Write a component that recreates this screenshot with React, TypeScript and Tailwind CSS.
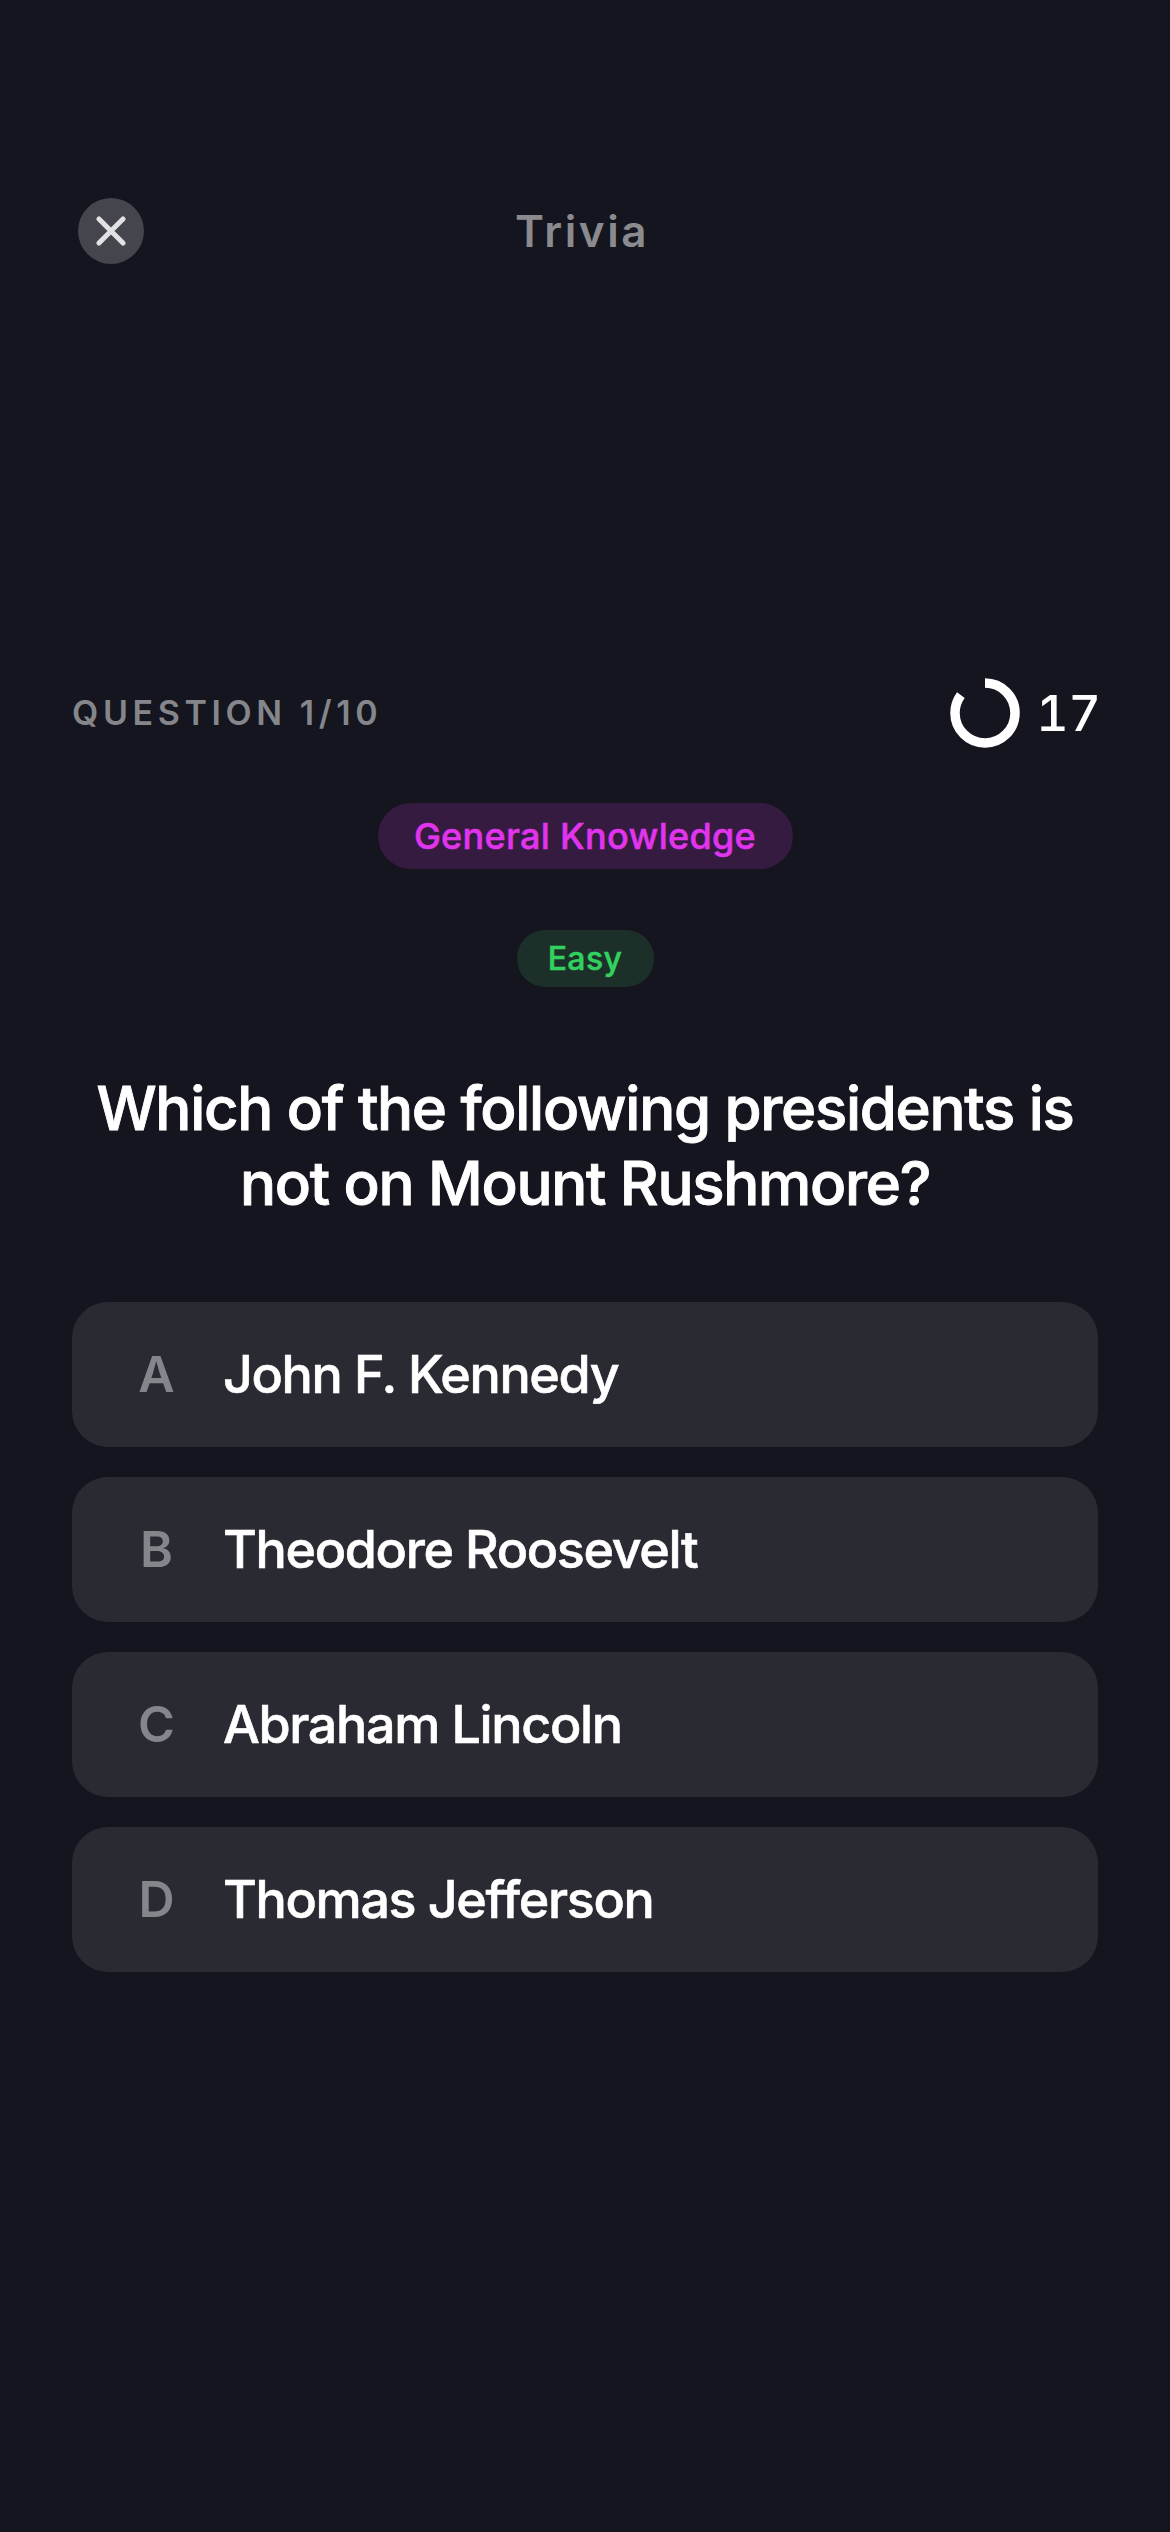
const answers = [
  { letter: 'A', text: 'John F. Kennedy' },
  { letter: 'B', text: 'Theodore Roosevelt' },
  { letter: 'C', text: 'Abraham Lincoln' },
  { letter: 'D', text: 'Thomas Jefferson' },
]

export default function App() {
  return (
    <div className="min-h-[2532px] bg-[#14151e] pt-[198px] font-['Inter',sans-serif] text-white">
      <div className="flex items-center pl-[78px]">
        <button className="flex h-[66px] w-[66px] items-center justify-center rounded-full bg-[#44454d]">
          <svg width="30" height="30" viewBox="0 0 30 30" fill="none" stroke="#e2e2e4" strokeWidth="5" strokeLinecap="round">
            <path d="M3 3 L27 27 M27 3 L3 27" />
          </svg>
        </button>
        <h1 className="ml-[371px] text-[44px] leading-[66px] font-semibold tracking-[2.6px] text-[#8a8a8f]">Trivia</h1>
      </div>

      <div className="mt-[414px] flex h-[69px] items-center justify-between pl-[72px] pr-[69px]">
        <span className="text-[34px] font-semibold tracking-[4.6px] text-[#85868c]">QUESTION 1/10</span>
        <div className="flex items-center gap-[16px]">
          <svg width="70" height="70" viewBox="0 0 70 70" fill="none" stroke="#ffffff" strokeWidth="9.5">
            <circle cx="35" cy="35" r="30" strokeDasharray="160.2 188.5" transform="rotate(-90 35 35)" />
          </svg>
          <span className="text-[50px] leading-none font-medium tabular-nums">17</span>
        </div>
      </div>

      <div className="mt-[56px] flex flex-col items-center gap-[61px]">
        <span className="flex h-[66px] w-[415px] items-center justify-center rounded-[33px] bg-[#351b40] text-[36px] font-medium tracking-[0.3px] text-[#e035ed] [-webkit-text-stroke:0.5px_#e035ed]">
          General Knowledge
        </span>
        <span className="flex h-[57px] w-[137px] items-center justify-center rounded-[28px] bg-[#1c3029] text-[32px] font-medium tracking-[0.4px] text-[#32d15f] [-webkit-text-stroke:0.5px_#32d15f]">
          Easy
        </span>
      </div>

      <h2 className="mx-[72px] mt-[84px] text-center text-[60px] leading-[75px] font-medium tracking-[-1.3px] [-webkit-text-stroke:0.9px_#ffffff]">
        Which of the following presidents is not on Mount Rushmore?
      </h2>

      <div className="mt-[81px] flex flex-col gap-[30px] px-[72px]">
        {answers.map((a) => (
          <div key={a.letter} className="flex h-[145px] items-center rounded-[36px] bg-[#292a32]">
            <span className="ml-[48px] mr-[30px] w-[73px] text-center text-[50px] font-semibold text-[#85868c]">{a.letter}</span>
            <span className="text-[52px] font-medium tracking-[-1.35px] [-webkit-text-stroke:0.6px_#ffffff]">{a.text}</span>
          </div>
        ))}
      </div>
    </div>
  )
}
